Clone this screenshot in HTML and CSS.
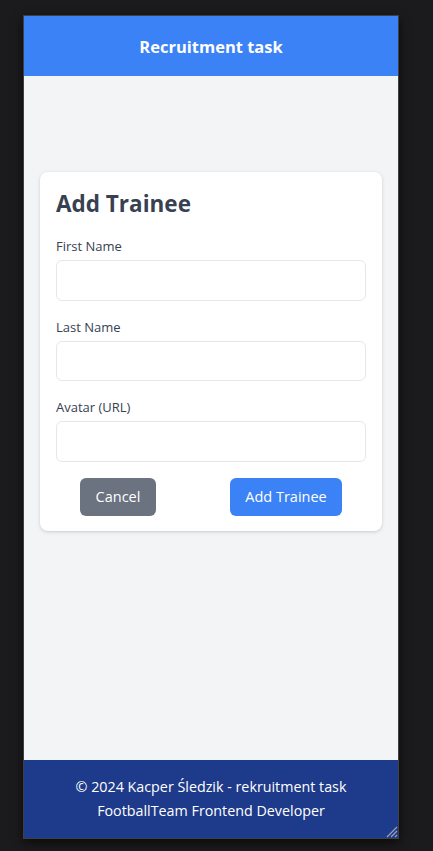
FILE: index.html
```html
<!DOCTYPE html>
<html lang="en">
<head>
<meta charset="utf-8">
<title>Recruitment task</title>
<link rel="stylesheet" href="styles.css">
</head>
<body>
<div class="frame">
  <header class="header">Recruitment task</header>
  <main class="main">
    <form class="card">
      <h1 class="title">Add Trainee</h1>
      <div class="field">
        <label class="label">First Name</label>
        <input class="input" type="text">
      </div>
      <div class="field">
        <label class="label">Last Name</label>
        <input class="input" type="text">
      </div>
      <div class="field">
        <label class="label">Avatar (URL)</label>
        <input class="input" type="text">
      </div>
      <div class="actions">
        <button type="button" class="btn btn-cancel">Cancel</button>
        <button type="button" class="btn btn-primary">Add Trainee</button>
      </div>
    </form>
  </main>
  <footer class="footer">
    <p class="footer-line">© 2024 Kacper Śledzik - rekruitment task</p>
    <p class="footer-line">FootballTeam Frontend Developer</p>
  </footer>
  <svg class="grip" width="14" height="14" viewBox="0 0 14 14">
    <path d="M13 3 L3 13 M13 7 L7 13 M13 11 L11 13" stroke="#9ca3af" stroke-width="1.2" fill="none"/>
  </svg>
</div>
</body>
</html>
```
FILE: styles.css
```css
* { box-sizing: border-box; }
html, body { margin: 0; }
body {
  background: #1b1b1d;
  padding: 15px 0 0 23px;
  font-family: "Open Sans", "Noto Sans", sans-serif;
  height: 851px;
  overflow: hidden;
}
.frame {
  position: relative;
  width: 376px;
  height: 824px;
  border: 1px solid #3f3f44;
  display: flex;
  flex-direction: column;
  box-shadow: 0 4px 10px rgba(0,0,0,0.6);
}
.header {
  height: 60px;
  background: #3b82f6;
  color: #fff;
  font-weight: 700;
  font-size: 16.5px;
  display: flex;
  align-items: center;
  justify-content: center;
  flex-shrink: 0;
}
.main {
  flex: 1;
  background: #f3f4f6;
  padding: 96px 16px 0;
}
.card {
  background: #fff;
  border-radius: 8px;
  padding: 16px 16px 15.5px;
  box-shadow: 0 1px 4px rgba(0,0,0,0.12), 0 1px 2px rgba(0,0,0,0.06);
}
.title {
  margin: 0 0 16px;
  font-size: 22.5px;
  line-height: 32px;
  font-weight: 700;
  color: #374151;
}
.field {
  display: flex;
  flex-direction: column;
  margin-bottom: 16px;
}
.label {
  font-size: 13px;
  line-height: 20px;
  color: #374151;
  margin-bottom: 4px;
}
.input {
  height: 40.5px;
  border: 1px solid #e5e7eb;
  border-radius: 6px;
  background: #fff;
  font: inherit;
  outline: none;
}
.actions {
  display: flex;
  justify-content: space-between;
  padding: 0 24px;
  margin-top: 16px;
}
.btn {
  height: 38px;
  border: none;
  border-radius: 6px;
  color: #fff;
  font-family: inherit;
  font-size: 14.5px;
  padding: 0;
}
.btn-cancel { background: #6b7280; width: 76px; }
.btn-primary { background: #3b82f6; width: 112px; }
.footer {
  background: #1e3a8a;
  color: #fff;
  text-align: center;
  padding: 15px 0 15px;
  flex-shrink: 0;
}
.footer-line {
  margin: 0;
  font-size: 14.3px;
  line-height: 24px;
}
.grip {
  position: absolute;
  right: 0;
  bottom: 0;
}
```
